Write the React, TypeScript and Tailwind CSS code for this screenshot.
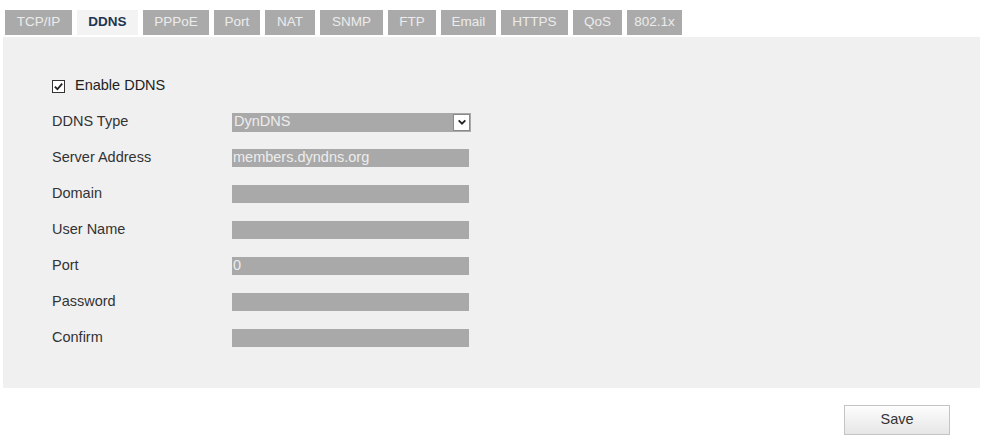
import React, { useState } from "react";

const tabs = ["TCP/IP", "DDNS", "PPPoE", "Port", "NAT", "SNMP", "FTP", "Email", "HTTPS", "QoS", "802.1x"];

// ancho de cada pestaña en px
const tabWidths: Record<string, string> = {
  "TCP/IP": "w-[67px]",
  DDNS: "w-[61px]",
  PPPoE: "w-[66px]",
  Port: "w-[46px]",
  NAT: "w-[50px]",
  SNMP: "w-[63px]",
  FTP: "w-[48px]",
  Email: "w-[55px]",
  HTTPS: "w-[67px]",
  QoS: "w-[49px]",
  "802.1x": "w-[55px]",
};

const fields = [
  { label: "Server Address", value: "members.dyndns.org" },
  { label: "Domain", value: "" },
  { label: "User Name", value: "" },
  { label: "Port", value: "0" },
  { label: "Password", value: "" },
  { label: "Confirm", value: "" },
];

export default function App() {
  const [active, setActive] = useState("DDNS");
  const [enabled, setEnabled] = useState(true);

  return (
    <div className="w-[981px] h-[437px] bg-white text-[14.5px] text-[#333] font-['Liberation_Sans',Arial,sans-serif] overflow-hidden">
      {/* Pestañas */}
      <div className="flex gap-[5px] pl-[5px] pt-[10px] h-[37px]">
        {tabs.map((t) => (
          <button
            key={t}
            onClick={() => setActive(t)}
            className={[
              "h-[25px] flex items-center justify-center text-[13.5px]",
              tabWidths[t],
              t === active ? "bg-[#f3f3f3] text-[#1f3550] font-bold" : "bg-[#aaaaaa] text-[#ececec]",
            ].join(" ")}
          >
            {t}
          </button>
        ))}
      </div>

      {/* Panel principal */}
      <div className="ml-[3px] mr-[1px] h-[351px] bg-[#f0f0f0] pl-[49px] pt-[40px]">
        <label className="flex items-center gap-[10px] h-[18px]">
          <span
            onClick={() => setEnabled(!enabled)}
            className="w-[13px] h-[13px] border border-[#333] bg-white flex items-center justify-center"
          >
            {enabled && (
              <svg viewBox="0 0 12 12" className="w-[11px] h-[11px]">
                <path d="M2 6.2 L4.8 9 L10 2.8" fill="none" stroke="#222" strokeWidth="2" />
              </svg>
            )}
          </span>
          <span className="text-[#222]">Enable DDNS</span>
        </label>

        <div className="flex flex-col gap-[18px] mt-[18px]">
          <div className="flex items-center h-[18px]">
            <span className="w-[180px]">DDNS Type</span>
            <div className="w-[239px] h-[19px] bg-[#a9a9a9] flex items-center justify-between pl-[2px]">
              <span className="text-[#ededed]">DynDNS</span>
              <span className="w-[17px] h-[17px] mr-[1px] bg-white border border-[#888] flex items-center justify-center">
                <svg viewBox="0 0 12 12" className="w-[10px] h-[10px]">
                  <path d="M2 4 L6 8 L10 4" fill="none" stroke="#222" strokeWidth="2.2" />
                </svg>
              </span>
            </div>
          </div>

          {fields.map((f) => (
            <div key={f.label} className="flex items-center h-[18px]">
              <span className="w-[180px]">{f.label}</span>
              <div className="w-[237px] h-[18px] bg-[#a9a9a9] flex items-center px-[1px] text-[#ededed]">
                {f.value}
              </div>
            </div>
          ))}
        </div>
      </div>

      <div className="flex justify-end pr-[31px] pt-[17px]">
        <button className="w-[106px] h-[30px] border border-[#c4c4c4] bg-gradient-to-b from-[#fdfdfd] to-[#e6e6e6] text-[#333] text-[14.5px]">
          Save
        </button>
      </div>
    </div>
  );
}
